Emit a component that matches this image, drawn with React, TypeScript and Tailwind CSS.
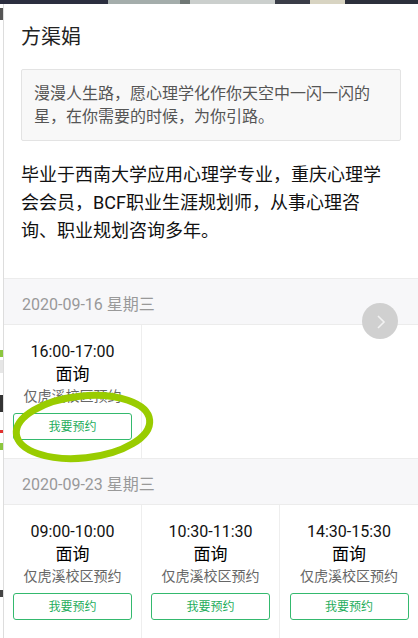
import React from "react";

const FONT = { fontFamily: "Roboto, 'Noto Sans CJK SC', 'Noto Sans', sans-serif" };

function Slot({ time, border }: { time: string; border?: boolean }) {
  return (
    <div className={`flex flex-col items-center pt-[16px] pb-[18px] ${border ? "border-r border-[#eeeeee]" : ""}`}>
      <div className="text-[16px] leading-[22px] text-[#111]">{time}</div>
      <div className="text-[17px] leading-[22px] font-normal text-[#000]">面询</div>
      <div className="text-[14px] leading-[22px] text-[#666]">仅虎溪校区预约</div>
      <div className="mt-[6px] w-[119px] h-[27px] border border-[#34b96e] rounded-[3px] flex items-center justify-center text-[12px] text-[#1fad5c]">
        我要预约
      </div>
    </div>
  );
}

function DateBand({ text }: { text: string }) {
  return (
    <div className="bg-[#f7f7f9] border-t border-b border-[#ececec] pt-[15px] pb-[8px] px-[18px] text-[16px] leading-[22px] text-[#999]">
      {text}
    </div>
  );
}

export default function App() {
  return (
    <div className="relative w-[418px] h-[638px] overflow-hidden bg-white" style={FONT}>
      {/* top image strip of the page behind */}
      <div className="flex h-[4px]">
        <div className="w-[108px] bg-[#2b2e3f]" />
        <div className="w-[72px] bg-[#a4adab]" />
        <div className="w-[10px] bg-[#6f7775]" />
        <div className="w-[85px] bg-[#cbcfcd]" />
        <div className="w-[35px] bg-[#3a3d48]" />
        <div className="w-[35px] bg-[#d8d4c2]" />
        <div className="flex-1 bg-[#2c2f3b]" />
      </div>
      <div className="flex">
        {/* left strip of the page behind */}
        <div className="w-[3px] flex flex-col bg-white">
          <div className="mt-[4px] h-[12px] bg-[#555]" />
          <div className="mt-[330px] h-[7px] bg-[#8cc63f]" />
          <div className="mt-[3px] h-[13px] bg-[#e6e6e6]" />
          <div className="mt-[22px] h-[17px] bg-[#333]" />
          <div className="mt-[18px] h-[3px] bg-[#e0312f]" />
          <div className="mt-[10px] h-[7px] bg-[#8cc63f]" />
          <div className="mt-[140px] h-[7px] bg-[#444]" />
        </div>
        {/* panel */}
        <div className="flex-1 border-l border-[#dddddd] bg-white">
          <div className="px-[17px] pt-[19px] pb-[33px]">
            <div className="text-[20px] leading-[28px] text-[#222]">方渠娟</div>
            <div className="mt-[18px] bg-[#f8f8f8] border border-[#e3e3e3] rounded-[2px] pl-[12px] pr-[20px] py-[12px] text-[16px] leading-[23px] text-[#555]">
              漫漫人生路，愿心理学化作你天空中一闪一闪的星，在你需要的时候，为你引路。
            </div>
            <div className="mt-[20px] mr-[10px] text-[18px] leading-[28px] text-[#111]">
              毕业于西南大学应用心理学专业，重庆心理学会会员，BCF职业生涯规划师，从事心理咨询、职业规划咨询多年。
            </div>
          </div>
          <DateBand text="2020-09-16 星期三" />
          <div className="grid grid-cols-3">
            <Slot time="16:00-17:00" border />
            <div />
            <div />
          </div>
          <DateBand text="2020-09-23 星期三" />
          <div className="grid grid-cols-3">
            <Slot time="09:00-10:00" border />
            <Slot time="10:30-11:30" border />
            <Slot time="14:30-15:30" />
          </div>
        </div>
      </div>

      {/* next arrow overlay */}
      <div className="absolute left-[362px] top-[303px] w-[36px] h-[36px] rounded-full bg-[#d0d0d0] flex items-center justify-center">
        <svg width="36" height="36" viewBox="0 0 36 36">
          <polyline points="16,13 22,19 16,25" fill="none" stroke="#f2f2f2" strokeWidth="1.6" />
        </svg>
      </div>

      {/* green annotation ellipse */}
      <svg className="absolute left-0 top-[380px]" width="170" height="90" viewBox="0 0 170 90">
        <ellipse cx="83" cy="47" rx="67" ry="31" fill="none" stroke="#99cc00" strokeWidth="7" transform="rotate(-6 83 47)" />
      </svg>
    </div>
  );
}
